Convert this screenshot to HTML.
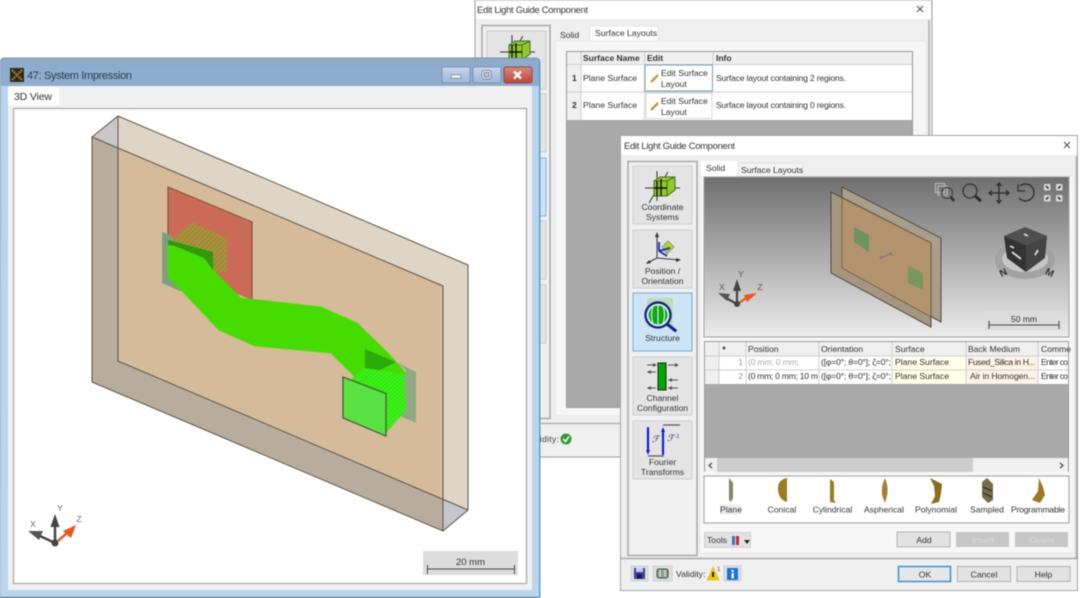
<!DOCTYPE html>
<html><head><meta charset="utf-8"><title>Light Guide</title>
<style>
html,body{margin:0;padding:0;background:#fff;width:1080px;height:598px;overflow:hidden}
svg{display:block;filter:blur(.5px)}
text{font-family:"Liberation Sans",sans-serif;font-size:8.6px;fill:#333}
.c{text-anchor:middle}
.l{stroke:#5c554a;stroke-width:1;fill:none}
</style></head><body>
<svg width="1080" height="598" viewBox="0 0 1080 598" xmlns="http://www.w3.org/2000/svg">
<defs>
<linearGradient id="tb" x1="0" y1="0" x2="0" y2="1"><stop offset="0" stop-color="#8dabcd"/><stop offset="1" stop-color="#b7d0ea"/></linearGradient>
<linearGradient id="view" x1="0" y1="0" x2="0" y2="1"><stop offset="0" stop-color="#6f6f6f"/><stop offset="1" stop-color="#ececec"/></linearGradient>
<linearGradient id="btn" x1="0" y1="0" x2="0" y2="1"><stop offset="0" stop-color="#c8d8ea"/><stop offset="1" stop-color="#9db8d6"/></linearGradient>
<linearGradient id="cl" x1="0" y1="0" x2="0" y2="1"><stop offset="0" stop-color="#d98a7e"/><stop offset="1" stop-color="#bb4436"/></linearGradient>
<pattern id="hatch" width="3.500" height="3.500" patternUnits="userSpaceOnUse" patternTransform="rotate(-45)"><rect width="3.500" height="1.800" fill="#7fb01e"/></pattern>
<pattern id="hatch2" width="3" height="3" patternUnits="userSpaceOnUse" patternTransform="rotate(-40)"><rect width="3" height="3" fill="#26f000"/><rect width="3" height="1" fill="#58e640"/></pattern>
<g id="coord"><path d="M-17 0H18M-13 15L6 -16M-5 -17V13" stroke="#333" stroke-width="1" fill="none"/><path d="M-8 -7L-2 -11L13 -11L13 2L5 8L-8 8Z" fill="#8ec92c" stroke="#4d6a1c"/><path d="M5 -7V8M5 -7L13 -11M-8 -7H5" stroke="#4d6a1c" fill="none"/><path d="M-5 -7V8M-1 -9V8M-8 0H5" stroke="#111" stroke-width="1.400"/></g>
</defs>

<!-- BACK DIALOG -->
<rect x="475" y="0" width="457" height="457" fill="#efefef" stroke="#9f9f9f"/>
<rect x="476" y="1" width="455" height="18" fill="#fff"/>
<text x="477" y="13" textLength="111" style="font-size:9.4px">Edit Light Guide Component</text>
<path d="M917 6L923 12M923 6L917 12" stroke="#444" stroke-width="1"/>
<path d="M929 20V418" stroke="#a9a9a9" stroke-width="1.5"/>
<rect x="482" y="25.500" width="68" height="393" fill="#f0f0f0" stroke="#a8a8a8" stroke-width="1.500"/>
<rect x="487" y="31" width="59" height="58" fill="#e4e4e4" stroke="#c8c8c8"/>
<use href="#coord" x="517" y="52"/>
<rect x="487" y="94" width="59" height="58" fill="#e4e4e4" stroke="#c8c8c8"/>
<rect x="487" y="158" width="59" height="58" fill="#cde4f7" stroke="#7fb5dd"/>
<rect x="487" y="221" width="59" height="58" fill="#e4e4e4" stroke="#c8c8c8"/>
<rect x="487" y="285" width="59" height="58" fill="#e4e4e4" stroke="#c8c8c8"/>
<rect x="555" y="41" width="371" height="375" fill="#f6f6f6" stroke="#e6e6e6"/>
<text x="560" y="38">Solid</text>
<rect x="590" y="26" width="68" height="15" fill="#fff" stroke="#e6e6e6"/>
<text x="595" y="36">Surface Layouts</text>
<rect x="566.500" y="51.500" width="346" height="356" fill="#a9a9a9" stroke="#999" stroke-width="1"/>
<rect x="567" y="52" width="345" height="12" fill="#efefef"/>
<rect x="567" y="64" width="345" height="56" fill="#fff"/>
<rect x="567" y="64" width="14" height="56" fill="#f0f0f0"/>
<path d="M581 52V120M644.500 52V120M713 52V64M567 64.500H912M567 92H912" stroke="#cfcfcf" stroke-width="1" fill="none"/>
<text x="583" y="61" style="font-weight:bold;font-size:8.500px" fill="#222">Surface Name</text>
<text x="647" y="61" style="font-weight:bold;font-size:8.500px">Edit</text>
<text x="716" y="61" style="font-weight:bold;font-size:8.500px">Info</text>
<text x="572" y="81" style="font-weight:bold">1</text><text x="572" y="108" style="font-weight:bold">2</text>
<text x="583" y="81">Plane Surface</text><text x="583" y="108">Plane Surface</text>
<rect x="645" y="65" width="67.500" height="26" fill="#fff" stroke="#6e9fc8"/>
<rect x="646" y="93" width="66" height="25.500" fill="#fff" stroke="#d8d8d8"/>
<path d="M651 82L658 75" stroke="#b89c3a" stroke-width="2.400"/><path d="M651 110L658 103" stroke="#b89c3a" stroke-width="2.400"/>
<text x="661" y="76">Edit Surface</text><text x="661" y="87">Layout</text>
<text x="661" y="104">Edit Surface</text><text x="661" y="115">Layout</text>
<text x="716" y="81" textLength="130">Surface layout containing 2 regions.</text>
<text x="716" y="108" textLength="130">Surface layout containing 0 regions.</text>
<path d="M541 423.500H930" stroke="#b0b0b0" stroke-width="1.500"/>
<text x="527" y="442" textLength="32">Validity:</text>
<circle cx="566" cy="439" r="5.500" fill="#2f9a34"/><path d="M563.500 439L565.500 441.500L569 436.500" stroke="#fff" stroke-width="1.500" fill="none"/>

<!-- SYSTEM IMPRESSION WINDOW -->
<path d="M0 63Q0 58 5 58H535Q540 58 540 63V598H0Z" fill="url(#tb)" stroke="#6f8296" stroke-width=".8"/>
<rect x="1" y="86" width="7" height="511" fill="#bcd5ee"/><rect x="532" y="86" width="7" height="511" fill="#bcd5ee"/>
<rect x="0" y="597" width="540" height="1" fill="#2f5f74"/><rect x="1" y="590" width="538" height="7" fill="#bcd5ee"/>
<rect x="539" y="60" width="1" height="538" fill="#4f9fd0"/>
<rect x="8" y="86" width="524" height="504" fill="#f0f0f0"/>
<rect x="8" y="87" width="51" height="18" fill="#fff"/>
<text x="14" y="100" textLength="38" style="font-size:10.500px">3D View</text>
<rect x="13.500" y="108.500" width="513" height="475" fill="#fff" stroke="#a5a5a5" stroke-width="1.200"/>
<rect x="10" y="68" width="14" height="14" fill="#2a2a1a"/>
<path d="M12 70L22 80M22 70L12 80" stroke="#c89a20" stroke-width="2" stroke-dasharray="1.500 1"/><circle cx="17" cy="75" r="1.500" fill="#c83a1a"/>
<text x="27" y="79" textLength="105" style="font-size:11px;fill:#2c3e50">47: System Impression</text>
<rect x="442" y="67" width="28" height="16" rx="2" fill="url(#btn)" stroke="#7f95ad"/><rect x="451" y="75" width="10" height="3" fill="#fff" stroke="#50657c" stroke-width=".6"/>
<rect x="473" y="67" width="28" height="16" rx="2" fill="url(#btn)" stroke="#7f95ad"/><rect x="483" y="71.500" width="7" height="6.500" rx="1" fill="none" stroke="#3f5570" stroke-width="2.600"/><rect x="483" y="71.500" width="7" height="6.500" rx="1" fill="none" stroke="#fff" stroke-width="1.300"/>
<rect x="504" y="67" width="28" height="16" rx="2" fill="url(#cl)" stroke="#8f4a44"/><path d="M514 71.500L521 78.500M521 71.500L514 78.500" stroke="#fff" stroke-width="2.400"/>

<!-- plates -->
<polygon points="118,116 468,265 468,510 118,361" fill="#dfd5c6"/>
<polygon points="92,137 443,286 443,531 92,382" fill="#b8ad9c"/>
<polygon points="118,148 443,286 443,499 118,361" fill="#d6bb9a"/>
<polygon points="92,137 118,116 118,148" fill="#c9c8c6"/>
<polygon points="443,499 468,510 443,531" fill="#c5c7cb"/>
<path class="l" d="M92 137L118 116L468 265V510L443 531M92 137L443 286V531L92 382ZM118 116V361L468 510"/>

<!-- red square -->
<polygon points="168,187 252,222 252,300 168,265" fill="#cb6b57"/>
<path d="M252 300V222L168 187V250" stroke="#7d5a3c" stroke-width="1.200" fill="none"/>
<polygon points="191,222 227,238 227,272 214,272 168,268 168,244" fill="url(#hatch)"/>
<polygon points="162,232 172,236 190,290 180,291 162,283" fill="#7f9e80"/>
<!-- beam -->
<polygon points="168,245 175,246 205,258 213,270 241,298 321,307 357,323 387,352 405,372 406,410 386,432 355,400 355,377 331,353 255,346 219,330 181,290 168,277" fill="#46dc00" stroke="#46dc00" stroke-opacity=".45" stroke-width="1.500"/>
<polygon points="168,240 213,252 213,270 204,258 175,246 168,245" fill="#2f9a0a"/>

<!-- right end -->
<polygon points="396,362 416,372 416,423 398,415 406,370" fill="#8fa982"/>
<polygon points="365,349 396,362 376,372 365,368" fill="#2bab09"/>
<polygon points="352,378 365,368 404,374 406,410 386,432 352,415" fill="url(#hatch2)"/>
<polygon points="343,377 386,393 386,436 343,418" fill="#58e243"/>
<path d="M343 377L386 393.500V436L343 418Z" stroke="#4d5a3a" stroke-width="1.300" fill="none"/>

<!-- triad -->
<path d="M55 543V525" stroke="#444" stroke-width="2.500"/><polygon points="55,514 50.500,527 59.500,527" fill="#444"/>
<path d="M55 543L40 536" stroke="#444" stroke-width="2.500"/><polygon points="28,531 43,531 39,540" fill="#555"/>
<path d="M58 541L68 532" stroke="#e8561a" stroke-width="2.500"/><polygon points="76,525 71,538 63,531" fill="#e8561a"/>
<circle cx="55" cy="543" r="3.500" fill="#444"/>
<text x="33" y="527" class="c" style="font-size:8.500px;fill:#666">X</text>
<text x="60" y="511" class="c" style="font-size:8.500px;fill:#666">Y</text>
<text x="79" y="522" class="c" style="font-size:8.500px;fill:#666">Z</text>
<!-- scale -->
<rect x="423" y="551" width="95" height="24" fill="#dcdcdc"/>
<text x="470.500" y="565" class="c" style="font-size:9.500px">20 mm</text>
<path d="M427.500 565V574M427.500 569H514.500M514.500 565V574" stroke="#444" stroke-width="1" fill="none"/>

<!-- FRONT DIALOG -->
<rect x="620.500" y="135.500" width="457" height="455" fill="#efefef" stroke="#a5a5a5"/>
<rect x="621" y="136" width="456" height="19" fill="#fff"/>
<text x="624" y="149" textLength="111" style="font-size:9.400px">Edit Light Guide Component</text>
<path d="M1064 142L1070 148M1070 142L1064 148" stroke="#444" stroke-width="1"/>
<path d="M1076.500 156V558" stroke="#a9a9a9" stroke-width="1.500"/>
<rect x="628" y="161.500" width="69" height="394" fill="#f0f0f0" stroke="#a8a8a8" stroke-width="1.500"/>

<rect x="633" y="166" width="59" height="58" fill="#e4e4e4" stroke="#cfcfcf"/><use href="#coord" x="662" y="188"/>
<text x="662.500" y="210" class="c">Coordinate</text><text x="662.500" y="220" class="c">Systems</text>

<rect x="633" y="230" width="59" height="58" fill="#e4e4e4" stroke="#cfcfcf"/>
<path d="M647 263L657 258L680 260M657 258V234" stroke="#333" fill="none"/>
<path d="M657 232L655 237H659ZM681 260L676 258V262ZM646 264L651 263L649 260Z" fill="#333"/>
<polygon points="662,247 668,241 674,247 667,254" fill="#a9d92a" stroke="#8a8a8a" stroke-width=".8"/>
<path d="M659 251V242M659 251L667 256M659 251L670 248" stroke="#1826d8" stroke-width="1.800" fill="none"/>
<text x="662.500" y="274" class="c">Position /</text><text x="662.500" y="284" class="c">Orientation</text>

<rect x="633" y="293" width="59" height="58" fill="#cde4f7" stroke="#7fb5dd" stroke-width="1.200"/>
<rect x="647" y="298" width="26" height="29" fill="#bfdcb4"/>
<circle cx="658" cy="315" r="12.500" fill="#e8f4ee" stroke="#16248e" stroke-width="2.400"/>
<ellipse cx="658" cy="315" rx="9.500" ry="9.500" fill="#0aa81a"/>
<path d="M653 306Q650 315 653 324M658 305V325M663 306Q666 315 663 324" stroke="#d4f0d0" stroke-width="1.200" fill="none"/>
<path d="M667 324L678 328" stroke="#16248e" stroke-width="3.200" transform="rotate(18 667 324)"/>
<text x="662.500" y="341" class="c">Structure</text>

<rect x="633" y="357" width="59" height="58" fill="#e4e4e4" stroke="#cfcfcf"/>
<rect x="658" y="363" width="8" height="27" fill="#00a800" stroke="#222"/>
<path d="M647 365H656M668 365H678M647 372H656M668 380H678M647 388H656M668 388H678" stroke="#555" stroke-width="1" fill="none"/>
<path d="M657 365L653 363V367ZM679 365L675 363V367ZM647 372L651 370V374ZM668 380L672 378V382ZM647 388L651 386V390ZM668 388L672 386V390Z" fill="#555"/>
<text x="662.500" y="401" class="c">Channel</text><text x="662.500" y="411" class="c">Configuration</text>

<rect x="633" y="421" width="59" height="58" fill="#e4e4e4" stroke="#cfcfcf"/>
<path d="M648 427V451M663 455V429" stroke="#1020e0" stroke-width="2.200"/>
<path d="M648 455L646 450H650ZM663 427L661 432H665Z" fill="#1020e0"/>
<path d="M648 456H664M663 425H680" stroke="#555" stroke-width="1.300"/>
<text x="652" y="442" style="font-size:9px;font-family:'Liberation Serif',serif;font-style:italic">&#8497;</text>
<text x="667" y="441" style="font-size:9px;font-family:'Liberation Serif',serif;font-style:italic">&#8497;</text>
<text x="675" y="438" style="font-size:5px;fill:#1020e0">-1</text>
<text x="662.500" y="465" class="c">Fourier</text><text x="662.500" y="475" class="c">Transforms</text>

<rect x="700" y="176" width="374" height="377" fill="#f7f7f7" stroke="#e8e8e8"/>
<rect x="701" y="161" width="37" height="15" fill="#fff"/>
<text x="706" y="171">Solid</text>
<rect x="738.500" y="163" width="64" height="13" fill="#f3f3f3" stroke="#e2e2e2"/>
<text x="741" y="173">Surface Layouts</text>

<!-- 3D view -->
<rect x="704" y="177" width="365" height="160" fill="url(#view)" stroke="#a0a0a0"/>
<polygon points="842,187 941,238 941,322 842,268" fill="#aa9d8a" stroke="#4f4a42"/>
<polygon points="831,192 931,243 931,327 831,273" fill="#a59680" stroke="#4f4a42"/>
<polygon points="842,198 931,243 931,317 842,268" fill="#b2936c" stroke="#5d5140" stroke-width=".7"/>
<polygon points="854,227 869,235 869,252 854,242" fill="#6f9261"/>
<polygon points="908,266 923,273 923,290 908,283" fill="#78975f"/>
<path d="M880 258L892 253M880 256L882 259M890 252L892 256" stroke="#7a6a90" stroke-width=".9" fill="none"/>
<!-- tools -->
<g fill="none" stroke="#2a2a2a">
<rect x="938" y="186" width="9" height="9" stroke="#b5b5b5" stroke-width="1.200"/><rect x="935.500" y="183.500" width="9" height="9" stroke="#b5b5b5" stroke-width="1.200"/><circle cx="947" cy="193" r="5.500" stroke="#444" stroke-width="1.200"/><path d="M951 197L954 201" stroke-width="2.400"/>
<circle cx="970" cy="191" r="7" stroke-width="1.300" stroke="#333"/><path d="M975 196L981 201" stroke-width="3"/>
<path d="M999 183V203M989 193H1009" stroke-width="1.300"/><path d="M996.500 186L999 183L1001.500 186M996.500 200L999 203L1001.500 200M992 190.500L989 193L992 195.500M1006 190.500L1009 193L1006 195.500" stroke-width="1.300"/>
<path d="M1020 186A8.500 8.500 0 1 1 1019 198" stroke-width="1.500" stroke="#333"/><path d="M1018 184V191H1025" stroke-width="1.300" stroke="#333"/>
</g>
<g fill="#d8d8d8"><rect x="1044" y="184" width="6.500" height="6.500" rx="1"/><rect x="1056" y="184" width="6.500" height="6.500" rx="1"/><rect x="1044" y="195" width="6.500" height="6.500" rx="1"/><rect x="1056" y="195" width="6.500" height="6.500" rx="1"/></g>
<path d="M1048.500 188.500L1046 186M1058 188.500L1060.500 186M1048.500 197L1046 199.500M1058 197L1060.500 199.500" stroke="#222" stroke-width="1.400"/>
<!-- cube -->
<ellipse cx="1025" cy="260" rx="30" ry="19" fill="#a2a2a2"/><ellipse cx="1025" cy="259" rx="23" ry="13" fill="#c6c6c6"/>
<polygon points="1025,227 1047,236 1026,245 1004,236" fill="#4f4f4f"/>
<polygon points="1004,236 1026,245 1026,272 1007,258" fill="#333"/>
<polygon points="1047,236 1026,245 1026,272 1045,258" fill="#444"/>
<path d="M1024 234L1028 236M1010 246L1014 248M1012 252L1021 259M1035 255L1038 250" stroke="#ddd" stroke-width="1.800"/>
<text x="1003" y="276" class="c" transform="rotate(-25 1003 272)" style="font-size:10px;font-weight:bold;fill:#333">N</text>
<text x="1050" y="276" class="c" transform="rotate(25 1050 272)" style="font-size:10px;font-weight:bold;fill:#333">M</text>
<!-- small scale -->
<rect x="985" y="311" width="77" height="19" fill="#dcdcdc"/>
<text x="1024" y="322" class="c" style="font-size:8.500px">50 mm</text>
<path d="M989 321V329M989 325H1059M1059 321V329" stroke="#444" fill="none"/>
<!-- small triad -->
<path d="M737 304V288" stroke="#444" stroke-width="2.200"/><polygon points="737,279 733,291 741,291" fill="#444"/>
<path d="M737 304L726 298" stroke="#444" stroke-width="2.200"/><polygon points="718,293 730,294 727,301" fill="#555"/>
<path d="M739 303L749 296" stroke="#e8561a" stroke-width="2.200"/><polygon points="757,293 747,302 744,295" fill="#e8561a"/>
<circle cx="737" cy="304" r="3" fill="#444"/>
<text x="722" y="290" class="c" style="fill:#555">X</text><text x="741" y="277" class="c" style="fill:#555">Y</text><text x="760" y="290" class="c" style="fill:#555">Z</text>

<!-- table -->
<rect x="704.500" y="341.500" width="364" height="130" fill="#a9a9a9" stroke="#9a9a9a"/>
<rect x="705" y="342" width="363" height="14" fill="#efefef"/>
<rect x="705" y="356" width="363" height="28" fill="#fff"/>
<rect x="705" y="356" width="14" height="28" fill="#efefef"/>
<rect x="892" y="356" width="74" height="28" fill="#fffee6"/>
<rect x="966" y="356" width="72" height="28" fill="#fff2e6"/>
<path d="M719 342V384M746 342V384M819 342V384M892 342V384M966 342V384M1038 342V384M705 356H1068M705 370H1068" stroke="#d0d0d0" fill="none"/>
<circle cx="724" cy="348" r="1.500" fill="#555"/>
<text x="748" y="352">Position</text><text x="821" y="352">Orientation</text><text x="895" y="352">Surface</text><text x="968" y="352">Back Medium</text><text x="1041" y="352">Comme</text>
<text x="743" y="365" text-anchor="end" style="fill:#999">1</text><text x="743" y="379" text-anchor="end" style="fill:#999">2</text>
<text x="748" y="365" style="fill:#aaa" textLength="51">(0 mm; 0 mm;</text>
<text x="748" y="379" textLength="70">(0 mm; 0 mm; 10 m</text>
<text x="821" y="365" textLength="70">([&#966;=0&#176;; &#952;=0&#176;]; &#950;=0&#176;;</text>
<text x="821" y="379" textLength="70">([&#966;=0&#176;; &#952;=0&#176;]; &#950;=0&#176;;</text>
<text x="895" y="365">Plane Surface</text><text x="895" y="379">Plane Surface</text>
<text x="968" y="365" textLength="67">Fused_Silica in H...</text>
<text x="970" y="379" textLength="65">Air in Homogen...</text>
<text x="1041" y="365" textLength="27">Enter co</text><text x="1041" y="379" textLength="27">Enter co</text>
<rect x="705" y="458" width="363" height="14" fill="#f0f0f0"/>
<rect x="717" y="458" width="256" height="14" fill="#cdcdcd"/>
<path d="M712 463L709 465.500L712 468M1060 463L1063 465.500L1060 468" stroke="#444" stroke-width="1.200" fill="none"/>

<!-- palette -->
<rect x="704" y="476" width="365" height="47" fill="#fff" stroke="#a9a9a9" stroke-width="1.200"/>
<path d="M729 478L733 483V498L731 502L729 500Z" fill="#7f8a62"/>
<path d="M787 478Q777 480 778 490Q779 500 787 502Z" fill="#9c7b22"/>
<path d="M830 479L834 482V500L836 503L830 502Z" fill="#9a7a28"/>
<path d="M885 478Q881 486 882 495L885 503Q889 492 887 484Z" fill="#a3812b"/>
<path d="M930 478L942 484L941 494L939 502L931 504L935 496L934 486Z" fill="#8c6c1f"/>
<path d="M982 482L987 478L993 484V500L988 503L982 497Z" fill="#7a6a45"/><path d="M983 487L992 491M983 493L992 497" stroke="#333" stroke-width="1.300"/>
<path d="M1039 478L1043 487L1045 495L1040 503L1032 500L1038 491Z" fill="#9a7a25"/>
<rect x="720" y="504.500" width="21" height="10" fill="#ececec"/>
<text x="731" y="512.500" class="c">Plane</text><text x="782" y="512.500" class="c">Conical</text><text x="832.500" y="512.500" class="c">Cylindrical</text><text x="884" y="512.500" class="c">Aspherical</text><text x="936" y="512.500" class="c">Polynomial</text><text x="987" y="512.500" class="c">Sampled</text><text x="1038" y="512.500" class="c" textLength="54">Programmable</text>

<!-- tools row -->
<rect x="704.500" y="532.500" width="46" height="15" fill="#e2e2e2" stroke="#d0d0d0"/>
<text x="707" y="543">Tools</text>
<rect x="732" y="536" width="3" height="9" fill="#3a70c8"/><rect x="736" y="536" width="3" height="9" fill="#c82828"/><path d="M744 540H750L747 544Z" fill="#222"/>
<rect x="897" y="532" width="53" height="15" fill="#e2e2e2" stroke="#b4b4b4"/><text x="924" y="543" class="c">Add</text>
<rect x="956" y="532" width="53" height="15" fill="#c6c6c6"/><text x="983" y="543" class="c" style="fill:#dcdcdc">Insert</text>
<rect x="1015" y="532" width="53" height="15" fill="#c6c6c6"/><text x="1042" y="543" class="c" style="fill:#dcdcdc">Delete</text>

<!-- footer -->
<path d="M621 558.500H1077" stroke="#a8a8a8" stroke-width="1.500"/>
<rect x="631" y="566" width="17" height="15" fill="#dedede" stroke="#cfcfcf"/><rect x="634" y="568" width="11" height="11" fill="#3a3fb0"/><rect x="636" y="568" width="7" height="4" fill="#ccd"/><rect x="637" y="574" width="5" height="5" fill="#1c1c50"/>
<rect x="653" y="566" width="19" height="15" fill="#dedede" stroke="#cfcfcf"/><rect x="657" y="569" width="11" height="9" rx="2" fill="#8aa594" stroke="#444"/><path d="M660 570V577M665 570V577" stroke="#e8efe8" stroke-width="1"/>
<text x="676" y="577">Validity:</text>
<polygon points="713,567 719,580 707,580" fill="#f4c800" stroke="#d8a800" stroke-width=".5"/><rect x="712" y="572" width="2" height="5" fill="#222"/><text x="717" y="571" style="font-size:6px;fill:#d02020">1</text>
<rect x="724" y="566" width="17" height="15" fill="#dedede" stroke="#cfcfcf"/><rect x="727" y="568" width="11" height="12" fill="#1674dc"/><rect x="731.500" y="573" width="2.200" height="5.500" fill="#fff"/><rect x="731.500" y="570" width="2.200" height="2" fill="#fff"/>
<rect x="898.500" y="566.500" width="52" height="15" fill="#e6e6e6" stroke="#3a92d8" stroke-width="1.500"/><text x="925" y="577.500" class="c">OK</text>
<rect x="957.500" y="566.500" width="53" height="15" fill="#e2e2e2" stroke="#b4b4b4"/><text x="984" y="577.500" class="c">Cancel</text>
<rect x="1017" y="566.500" width="53" height="15" fill="#e2e2e2" stroke="#b4b4b4"/><text x="1043.500" y="577.500" class="c">Help</text>
</svg>
</body></html>
